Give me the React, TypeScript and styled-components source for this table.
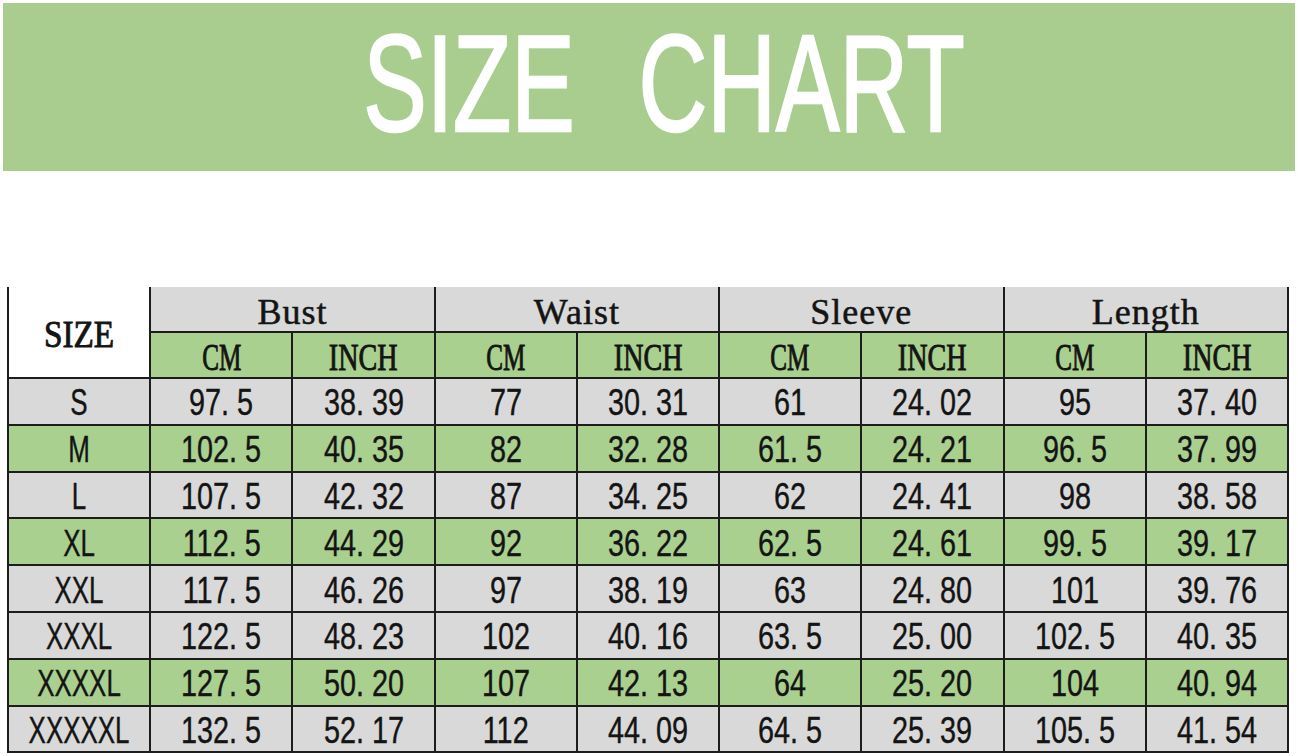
import React from "react";
import styled, { createGlobalStyle } from "styled-components";

const GlobalStyle = createGlobalStyle`
  html, body {
    margin: 0;
    padding: 0;
    background: #ffffff;
  }
  body {
    font-family: "Liberation Sans", Arial, sans-serif;
  }
`;

const Page = styled.div`
  width: 1298px;
  height: 756px;
  display: flex;
  flex-direction: column;
  background: #ffffff;
  overflow: hidden;
`;

const Banner = styled.header`
  margin: 3px 3px 0 3px;
  height: 168px;
  background: #a9cd8f;
  display: flex;
  align-items: center;
  justify-content: center;
  padding: 0 0 8px 30px;
  box-sizing: border-box;
`;

const Title = styled.h1`
  margin: 0;
  display: inline-block;
  font-family: "Liberation Sans", Arial, sans-serif;
  font-weight: 400;
  font-size: 138px;
  line-height: 1;
  color: #ffffff;
  -webkit-text-stroke: 2.4px #ffffff;
  word-spacing: 54px;
  transform: scaleX(0.69);
  transform-origin: center;
  white-space: nowrap;
`;

const Table = styled.div`
  margin: 116px 0 0 7px;
  width: 1282px;
  box-sizing: border-box;
  display: grid;
  grid-template-columns: repeat(9, 1fr);
  grid-template-rows: 44px 44px repeat(8, 44.8px);
  gap: 2px;
  padding: 0 2px 2px 2px;
  background: #1d1d1d;
`;

const Cell = styled.div<{ $bg: string; $span?: number; $rows?: number }>`
  background: ${(p) => p.$bg};
  display: flex;
  align-items: center;
  justify-content: center;
  overflow: visible;
  white-space: nowrap;
  ${(p) => (p.$span ? `grid-column: span ${p.$span};` : "")}
  ${(p) => (p.$rows ? `grid-row: span ${p.$rows};` : "")}
`;

const GroupLabel = styled.span`
  font-family: "Liberation Serif", "Times New Roman", serif;
  font-size: 36px;
  letter-spacing: 1px;
  color: #141414;
  -webkit-text-stroke: 0.5px #141414;
  line-height: 1;
  padding-top: 5px;
`;

const UnitLabel = styled.span<{ $squeeze: number }>`
  display: inline-block;
  font-family: "Liberation Serif", "Times New Roman", serif;
  font-size: 37px;
  color: #141414;
  line-height: 1;
  -webkit-text-stroke: 0.9px #141414;
  transform: scaleX(${(p) => p.$squeeze});
  padding-top: 4px;
`;

const Value = styled.span<{ $squeeze: number }>`
  display: inline-block;
  font-family: "Liberation Sans", Arial, sans-serif;
  font-size: 36px;
  color: #141414;
  line-height: 1;
  -webkit-text-stroke: 0.4px #141414;
  transform: scaleX(${(p) => p.$squeeze});
  padding-top: 4px;
`;

const GRAY = "#d9d9d9";
const GREEN = "#a9d08e";
const WHITE = "#ffffff";

const groups = ["Bust", "Waist", "Sleeve", "Length"];

type Row = { size: string; green: boolean; values: string[] };

const rows: Row[] = [
  { size: "S", green: false, values: ["97. 5", "38. 39", "77", "30. 31", "61", "24. 02", "95", "37. 40"] },
  { size: "M", green: true, values: ["102. 5", "40. 35", "82", "32. 28", "61. 5", "24. 21", "96. 5", "37. 99"] },
  { size: "L", green: false, values: ["107. 5", "42. 32", "87", "34. 25", "62", "24. 41", "98", "38. 58"] },
  { size: "XL", green: true, values: ["112. 5", "44. 29", "92", "36. 22", "62. 5", "24. 61", "99. 5", "39. 17"] },
  { size: "XXL", green: false, values: ["117. 5", "46. 26", "97", "38. 19", "63", "24. 80", "101", "39. 76"] },
  { size: "XXXL", green: false, values: ["122. 5", "48. 23", "102", "40. 16", "63. 5", "25. 00", "102. 5", "40. 35"] },
  { size: "XXXXL", green: true, values: ["127. 5", "50. 20", "107", "42. 13", "64", "25. 20", "104", "40. 94"] },
  { size: "XXXXXL", green: false, values: ["132. 5", "52. 17", "112", "44. 09", "64. 5", "25. 39", "105. 5", "41. 54"] },
];

export default function App() {
  return (
    <>
      <GlobalStyle />
      <Page>
        <Banner>
          <Title>SIZE CHART</Title>
        </Banner>
        <Table>
          <Cell $bg={WHITE} $rows={2}>
            <UnitLabel $squeeze={0.9}>SIZE</UnitLabel>
          </Cell>
          {groups.map((g) => (
            <Cell key={g} $bg={GRAY} $span={2}>
              <GroupLabel>{g}</GroupLabel>
            </Cell>
          ))}
          {groups.map((g) => (
            <React.Fragment key={g + "-u"}>
              <Cell $bg={GREEN}>
                <UnitLabel $squeeze={0.68}>CM</UnitLabel>
              </Cell>
              <Cell $bg={GREEN}>
                <UnitLabel $squeeze={0.76}>INCH</UnitLabel>
              </Cell>
            </React.Fragment>
          ))}
          {rows.map((r) => (
            <React.Fragment key={r.size}>
              <Cell $bg={r.green ? GREEN : GRAY}>
                <Value $squeeze={0.72}>{r.size}</Value>
              </Cell>
              {r.values.map((v, i) => (
                <Cell key={i} $bg={r.green ? GREEN : GRAY}>
                  <Value $squeeze={0.8}>{v}</Value>
                </Cell>
              ))}
            </React.Fragment>
          ))}
        </Table>
      </Page>
    </>
  );
}
